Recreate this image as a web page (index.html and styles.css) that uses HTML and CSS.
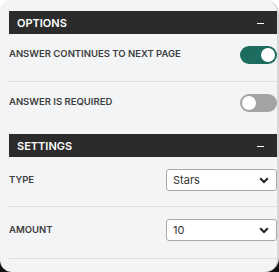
FILE: index.html
```html
<!DOCTYPE html>
<html lang="en">
<head>
    <meta charset="UTF-8">
    <meta name="viewport" content="width=device-width, initial-scale=1.0">
    <title>Question Options</title>
    <link rel="stylesheet" href="styles.css">
</head>
<body>
    <div class="panel">
        <!-- Options -->
        <div class="section-header">
            <span>OPTIONS</span>
            <span class="collapse"></span>
        </div>
        <div class="row switch-row">
            <label>Answer continues to next page</label>
            <span class="toggle on"><span class="knob"></span></span>
        </div>
        <div class="row switch-row last">
            <label>Answer is required</label>
            <span class="toggle"><span class="knob"></span></span>
        </div>

        <!-- Settings -->
        <div class="section-header">
            <span>SETTINGS</span>
            <span class="collapse"></span>
        </div>
        <div class="row type-row">
            <label>Type</label>
            <div class="select">
                <span>Stars</span>
                <svg width="10" height="7" viewBox="0 0 10 7"><path d="M1.2 1.3 L5 5 L8.8 1.3" fill="none" stroke="#222" stroke-width="2"/></svg>
            </div>
        </div>
        <div class="row amount-row">
            <label>Amount</label>
            <div class="select">
                <span>10</span>
                <svg width="10" height="7" viewBox="0 0 10 7"><path d="M1.2 1.3 L5 5 L8.8 1.3" fill="none" stroke="#222" stroke-width="2"/></svg>
            </div>
        </div>
    </div>
</body>
</html>
```

FILE: styles.css
```css
body {
    margin: 0;
    padding: 0;
    font-family: Inter, "Liberation Sans", sans-serif;
    background: linear-gradient(#fff 0, #fff 80%, #111 80%);
    height: 272px;
    overflow: hidden;
}

.panel {
    width: 279px;
    height: 272px;
    box-sizing: border-box;
    padding: 11px 0 0 9px;
    background: #f3f4f5;
    border-right: 2px solid #d6d7d8;
    border-radius: 10px 14px 14px 12px;
}

.section-header {
    height: 23px;
    background: #2b2b2b;
    color: #fff;
    display: flex;
    align-items: center;
    justify-content: space-between;
    padding: 0 13px 0 8px;
    font-size: 11px;
    font-weight: 600;
}

.collapse {
    width: 7px;
    height: 1.5px;
    background: #fff;
    margin-top: 2px;
}

.row {
    box-sizing: border-box;
    display: flex;
    align-items: flex-start;
    justify-content: space-between;
    padding-top: 12px;
    border-bottom: 1px solid #dcdddf;
}

.row label {
    font-size: 9.5px;
    font-weight: 600;
    text-transform: uppercase;
    color: #3d3e40;
}

.switch-row {
    height: 48px;
}

.switch-row label {
    line-height: 13px;
    margin-top: 1px;
}

.switch-row.last {
    height: 52px;
    border-bottom: none;
}

.type-row {
    height: 50px;
}

.amount-row {
    height: 52px;
}

.type-row label,
.amount-row label {
    line-height: 22px;
}

.toggle {
    width: 37px;
    height: 18px;
    border-radius: 9px;
    background: #a3a3a3;
    position: relative;
}

.toggle.on {
    background: #1c6d60;
}

.toggle .knob {
    position: absolute;
    top: 2px;
    left: 2px;
    width: 14px;
    height: 14px;
    border-radius: 50%;
    background: #fff;
}

.toggle.on .knob {
    left: 21px;
}

.select {
    width: 111px;
    height: 22px;
    box-sizing: border-box;
    border: 1px solid #a9a9a9;
    border-radius: 3px;
    background: #fff;
    display: flex;
    align-items: center;
    justify-content: space-between;
    padding: 0 7px 0 6px;
    font-size: 11px;
    color: #333;
}
```
